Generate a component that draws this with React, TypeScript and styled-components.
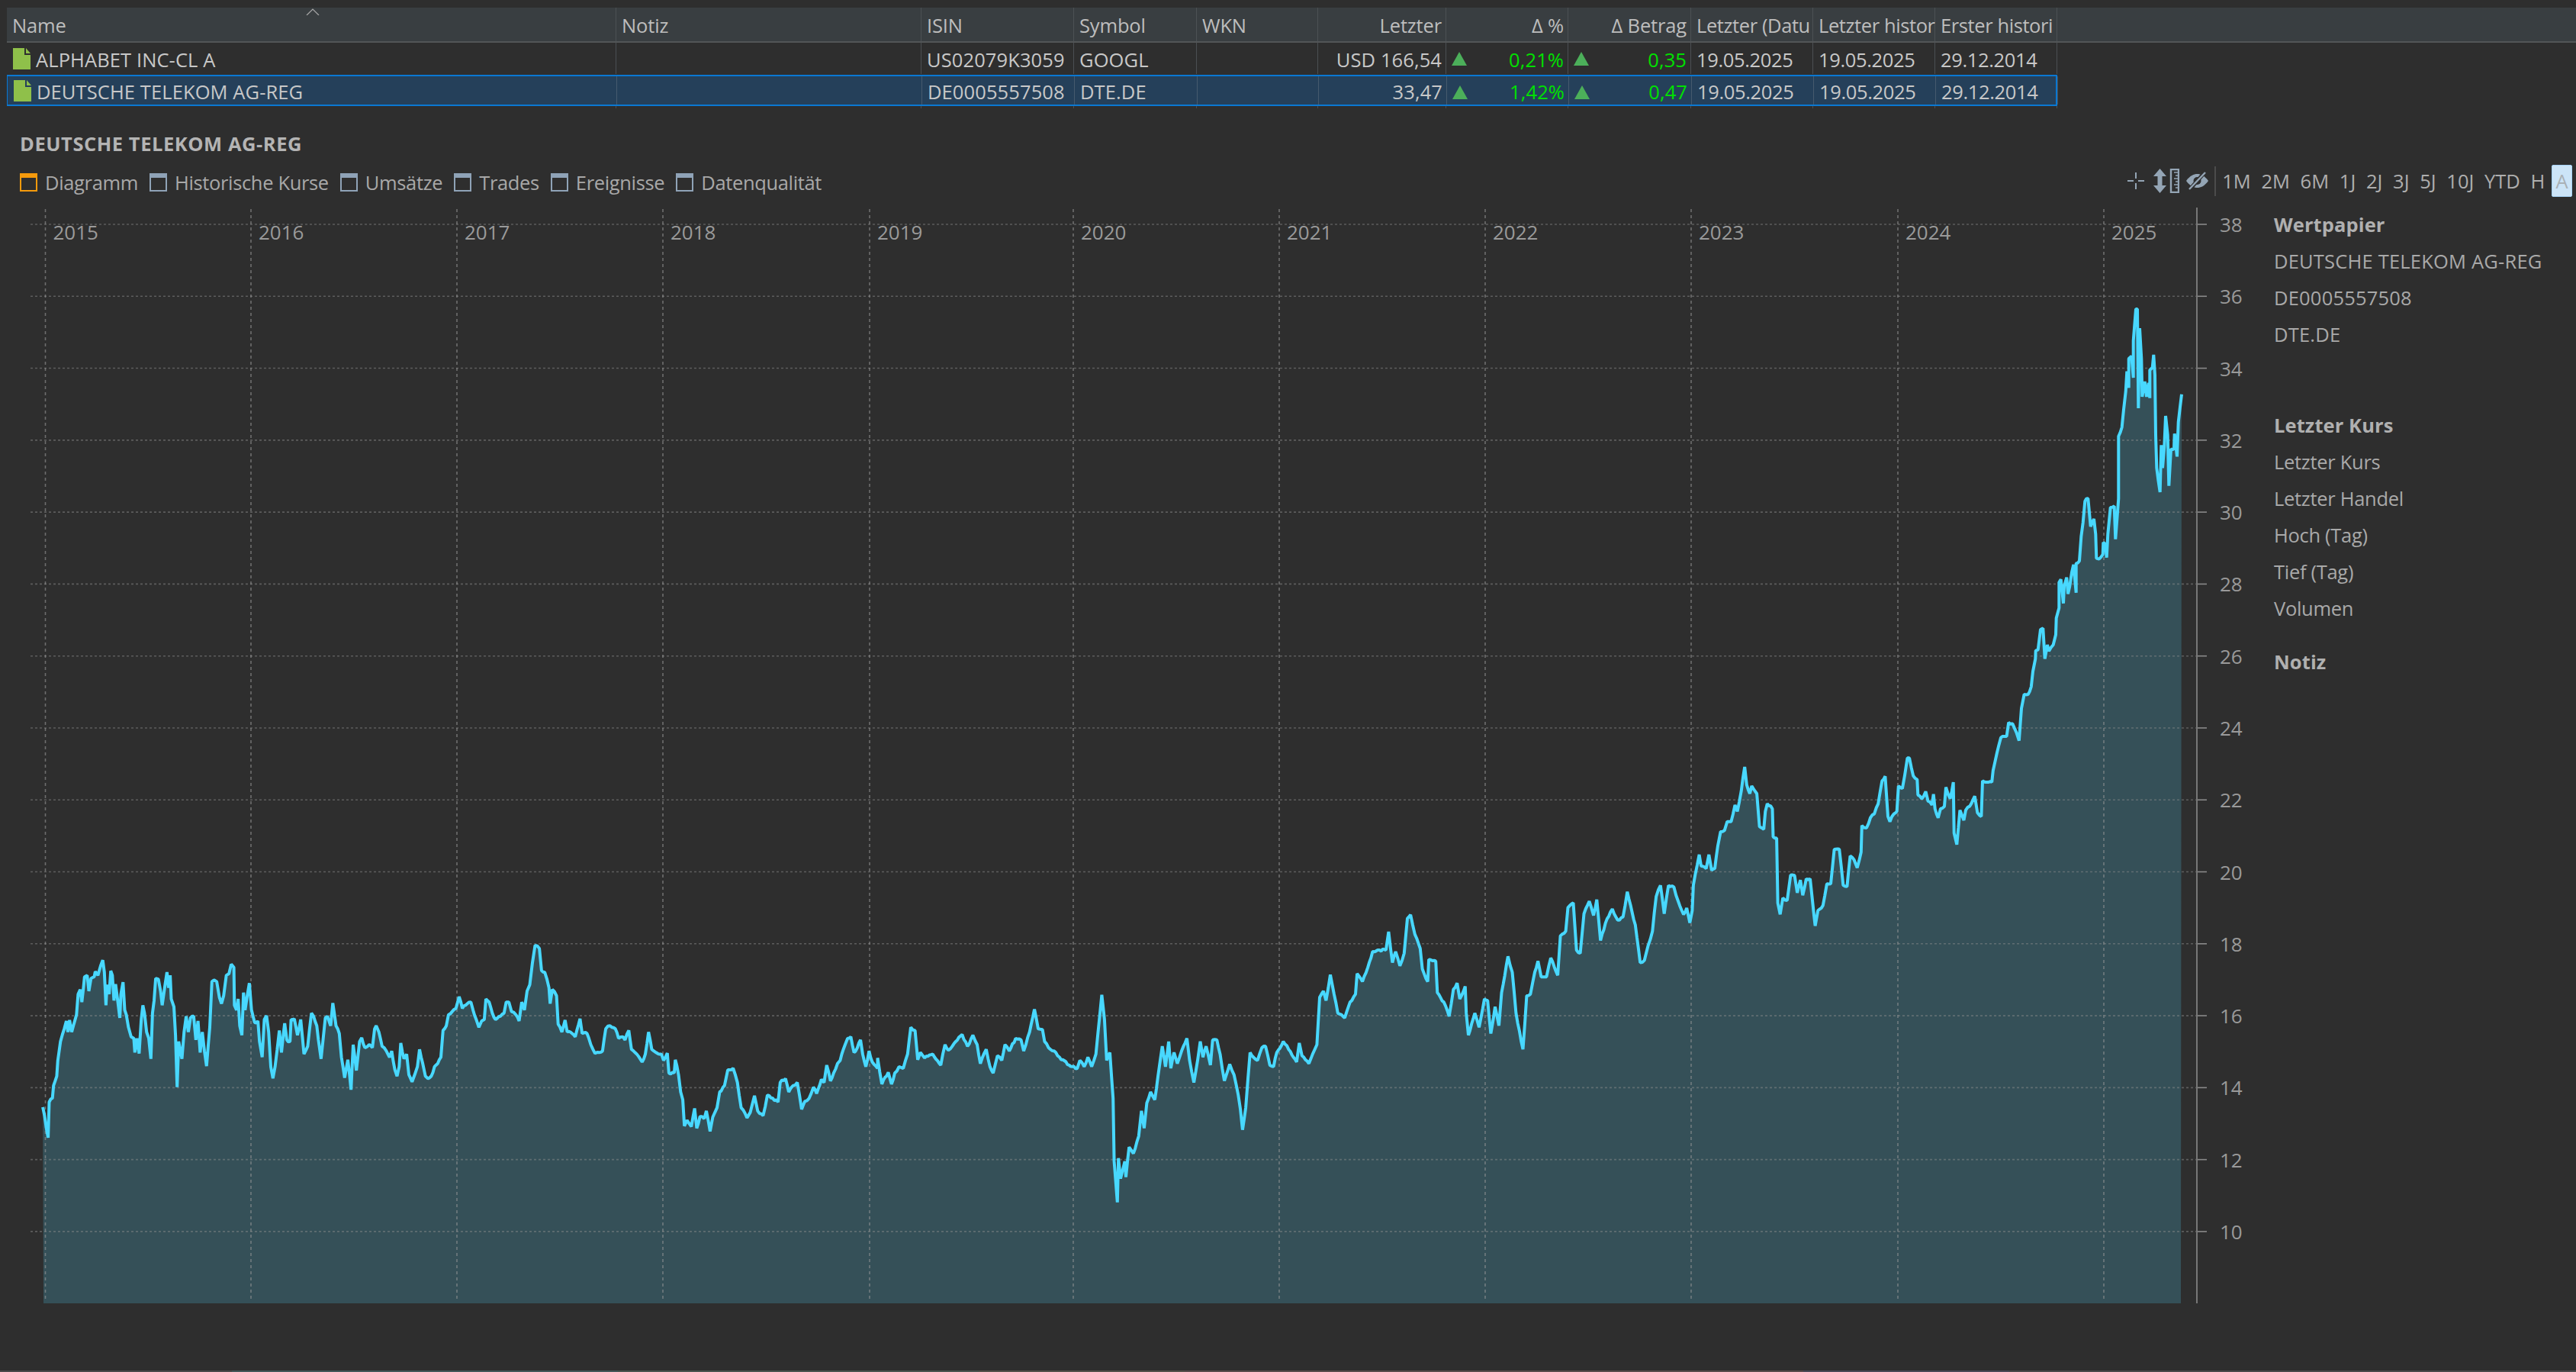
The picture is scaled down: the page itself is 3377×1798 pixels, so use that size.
import React from 'react';
import styled, { createGlobalStyle } from 'styled-components';

const GlobalStyle = createGlobalStyle`
  html, body {
    margin: 0;
    padding: 0;
    background: #2e2e2e;
    overflow: hidden;
  }

  body {
    font-family: "Open Sans", "Noto Sans", sans-serif;
    font-size: 25.5px;
    letter-spacing: -0.35px;
    color: #c8c8c8;
  }
`;

const COLUMNS =
  '799px 400px 200px 161px 159px 168px 160px 161px 160px 160px 160px';

// Kursverlauf, abgelesen aus Ausschnitten des Diagramms.
// Jeder Abschnitt hat eigene Skalierung: [x0, sx, y0, sy, punkte]
type Trace = [number, number, number, number, number[]];

const TRACES: Trace[] = [
  [0, 1.4255, 1150, 2.42, [
    80,728, 90,825, 92,712, 98,700, 100,660, 106,630, 108,580, 113,520, 120,480, 124,455, 127,490, 130,452, 134,490, 138,465, 143,435, 146,370,
    150,355, 153,395, 156,350, 158,315, 163,310, 166,360, 170,320, 176,315, 178,298, 183,310, 188,280, 192,262, 195,300, 198,405, 200,340, 204,370,
    207,296, 210,310, 213,390, 216,338, 220,390, 224,445, 226,370, 230,332, 233,420, 236,435, 240,475, 245,505, 250,510, 252,555, 256,510, 260,558,
    264,450, 267,405, 270,430, 274,490, 278,510, 282,575, 285,430, 288,390, 291,320, 296,322, 300,360, 303,405, 308,345, 312,300, 315,350, 318,310,
    320,385, 325,410, 328,500, 331,665, 334,520, 340,575, 344,490, 348,440, 352,490, 356,445, 362,440, 366,515, 370,455, 374,555, 378,490, 382,550,
    386,598, 392,475, 396,330, 400,325, 405,330, 410,380, 414,400, 418,375, 423,310, 428,305, 432,275, 437,285, 438,405, 442,420, 445,385, 448,470,
    452,500, 455,365, 458,420, 462,375, 466,335, 470,420, 476,460, 482,455, 485,520, 490,570, 494,450, 498,438, 502,490, 506,600, 510,637, 514,600,
    522,485, 526,555, 532,462, 536,515, 542,520, 544,450, 550,448, 556,500, 562,450, 568,560, 575,535, 582,430, 586,440, 592,470, 595,515, 600,575,
    608,445, 612,440, 618,470, 622,398, 628,470, 634,495, 638,570, 644,635, 650,578, 656,673, 660,530, 666,612, 672,520, 676,508, 682,540, 690,530,
    696,540, 700,480, 703,470, 708,490, 714,535, 722,550, 728,570, 732,550, 738,610, 742,630, 746,600, 749,525, 755,575, 760,560, 764,625, 770,648,
    775,625, 780,600, 784,545, 790,590, 795,630, 800,638, 806,630, 812,600, 818,590, 824,570, 828,485, 834,470, 838,435, 845,425, 852,415, 858,378,
    864,415, 870,405, 880,395, 884,420, 890,450, 895,475, 900,455, 905,450, 908,385, 914,395, 920,430, 926,450, 935,440, 942,430, 946,395, 951,395,
    956,425, 964,435, 970,455, 975,395, 980,420, 985,360, 990,340, 995,270, 1000,215, 1008,225, 1012,295, 1018,300, 1026,350, 1028,400, 1032,355,
    1040,375, 1043,465, 1050,490, 1056,452, 1060,490, 1066,490, 1075,505, 1084,448, 1088,495, 1097,495, 1104,530, 1112,558, 1120,555, 1126,550,
    1132,480, 1140,470, 1150,480, 1156,510, 1164,505, 1168,515, 1175,485, 1180,545, 1190,560, 1200,585, 1206,560, 1212,490, 1218,545, 1226,555,
    1236,560, 1240,580, 1247,557, 1250,620, 1260,620, 1262,578, 1268,625, 1272,680, 1276,705, 1279,788, 1284,770, 1292,790, 1298,732, 1302,795,
    1308,758, 1316,765, 1320,740, 1327,805, 1332,760, 1340,730, 1345,680, 1354,660, 1360,610, 1370,605, 1378,650, 1385,730, 1396,762, 1402,745,
    1410,692, 1416,740, 1426,755, 1434,690, 1444,700, 1454,712, 1458,650, 1468,638, 1474,680, 1482,660, 1490,650, 1498,735, 1504,710, 1512,700,
    1520,665, 1526,685, 1535,640, 1540,650, 1545,595, 1552,645, 1558,620, 1565,590,
  ]],
  [1100, 1.4255, 1150, 2.42, [
    2,580, 8,545, 16,510, 22,505, 28,555, 34,540, 40,515, 44,560, 50,600, 56,550, 62,585, 72,605, 72,572, 80,655, 92,618, 98,655, 104,620, 112,600,
    120,605, 128,560, 134,475, 142,485, 147,578, 152,555, 160,572, 175,560, 190,595, 198,530, 204,548, 218,520, 230,498, 240,535, 250,500, 258,530,
    264,590, 275,545, 282,600, 288,620, 296,565, 304,580, 310,530, 318,550, 330,510, 340,515, 345,550, 356,490, 365,418, 372,480, 380,482, 384,520,
    395,545, 405,555, 412,570, 430,595, 445,605, 450,580, 458,600, 465,570, 472,600, 480,560, 484,490, 491,372, 496,450, 500,580, 506,555, 512,700,
    514,900, 520,1030, 522,890, 526,955, 534,900, 536,950, 542,855, 550,875, 560,820, 565,740, 570,795, 575,715, 582,680, 590,705, 596,630, 604,535,
    610,600, 616,520, 620,605, 626,555, 632,590, 640,550, 650,510, 655,580, 663,650, 670,580, 675,520, 680,570, 686,535, 694,595, 698,515, 706,515,
    712,560, 720,645, 730,592, 738,625, 746,690, 750,735, 754,800, 760,730, 768,555, 782,580, 790,540, 797,535, 805,595, 812,600, 818,555, 830,520,
    840,545, 855,585, 860,525, 865,565, 878,590, 885,560, 893,530, 898,380, 905,360, 910,390, 918,308, 925,370, 932,430, 945,445, 955,395, 965,370,
    968,305, 978,330, 988,285, 997,235, 1010,230, 1022,230, 1027,172, 1034,270, 1040,235, 1048,280, 1056,240, 1062,130, 1068,118, 1076,180, 1086,225,
    1090,290, 1100,330, 1102,260, 1115,265, 1118,365, 1130,395, 1140,440, 1148,355, 1155,335, 1160,385, 1170,345, 1172,430, 1176,500, 1188,430,
    1196,475, 1206,385, 1212,390, 1218,495, 1226,410, 1233,470, 1238,365, 1250,250, 1258,300, 1265,430, 1278,545, 1285,375, 1292,370, 1300,300,
    1306,265, 1312,315, 1322,315, 1330,255, 1343,310, 1348,185, 1358,170, 1362,95, 1372,80, 1378,230, 1385,240, 1392,115, 1402,75, 1410,120, 1416,70,
    1423,200, 1432,145, 1445,100, 1455,135, 1465,125, 1473,45, 1482,110, 1488,150, 1497,270, 1505,262, 1512,215, 1520,170, 1527,60, 1535,25, 1542,115,
    1550,25, 1560,30, 1568,75,
  ]],
  [2100, 1.96, 900, 3, [
    200,860, 210,895, 218,870, 226,928, 232,880, 235,780, 245,700, 250,660, 255,705, 268,715, 275,660, 282,722, 290,715, 298,625, 305,570, 315,565,
    322,530, 332,530, 342,465, 348,490, 358,410, 367,315, 372,385, 380,420, 385,390, 398,420, 405,550, 416,560, 420,490, 425,460, 438,480, 440,590,
    449,595, 452,850, 458,895, 465,830, 476,840, 485,740, 495,742, 502,810, 510,760, 516,820, 525,755, 535,755, 545,900, 548,940, 555,880, 568,860,
    578,775, 588,775, 597,640, 610,638, 620,780, 630,785, 638,665, 648,680, 656,712, 666,650, 668,545, 680,555, 690,515, 700,500, 710,460, 720,370,
    728,352, 735,510, 740,530, 750,500, 758,490, 762,390, 772,400, 778,350, 785,280, 790,280, 800,350, 810,365, 812,425, 822,440, 832,412, 838,450,
    848,465, 852,422, 856,480, 864,515, 870,480, 880,470, 884,395, 895,440, 903,375, 905,575, 912,620, 920,485, 930,525, 935,485, 945,470, 958,430,
    965,495, 975,510, 978,370, 990,375, 1002,375, 1005,330, 1015,260, 1025,200, 1040,195, 1045,140, 1055,145, 1065,180, 1072,212, 1078,85, 1085,30,
    1095,30, 1103,0,
  ]],
  [2400, 3, 380, 3, [
    795,1500, 805,1450, 806,1418, 815,1415, 825,1335, 835,1330, 842,1450, 852,1395, 858,1420, 875,1395, 885,1355, 887,1290, 898,1250, 898,1150,
    905,1138, 915,1232, 918,1165, 928,1130, 933,1195, 940,1165, 948,1110, 955,1080, 965,1190, 965,1075, 978,1065, 985,970, 992,915, 1000,830,
    1012,820, 1022,930, 1035,900, 1042,960, 1045,1055, 1055,1058, 1070,1040, 1072,992, 1080,1000, 1085,1052, 1090,960, 1100,855, 1115,850, 1120,980,
    1127,885, 1132,820, 1132,575, 1145,540, 1152,470, 1160,400, 1165,320, 1172,385, 1172,270, 1183,260, 1190,345, 1190,200, 1200,75, 1206,75, 1210,465,
    1215,150, 1222,270, 1225,420, 1235,360, 1242,420, 1250,365, 1255,425, 1255,315, 1265,305, 1270,255, 1275,335, 1278,570, 1282,700, 1295,795,
    1300,610, 1305,700, 1312,615, 1317,495, 1325,570, 1330,770, 1338,625, 1350,625, 1352,565, 1362,655, 1367,520, 1380,410,
  ]],
];

function wobble(i: number) {
  const v = Math.sin(i * 12.9898) * 43758.5453;
  return (v - Math.floor(v) - 0.5) * 3.2;
}

// Punkte umrechnen und zwischen ihnen kleine Ausschläge einfügen,
// damit die Linie so kräftig wirkt wie der echte Tageskurs.
function buildLine() {
  const pts: [number, number][] = [];

  for (const [x0, sx, y0, sy, raw] of TRACES) {
    for (let i = 0; i < raw.length; i += 2) {
      pts.push([x0 + raw[i] / sx, y0 + raw[i + 1] / sy]);
    }
  }

  const out: string[] = [];
  let n = 0;

  pts.forEach(([x, y], i) => {
    out.push(`${x.toFixed(1)},${y.toFixed(1)}`);

    const next = pts[i + 1];
    if (!next) return;

    const steps = Math.floor((next[0] - x) / 2);
    for (let k = 1; k < steps; k++) {
      const t = k / steps;
      const px = x + (next[0] - x) * t;
      const py = y + (next[1] - y) * t + wobble(n++);
      out.push(`${px.toFixed(1)},${py.toFixed(1)}`);
    }
  });

  return out;
}

const LINE = buildLine();
const AREA = ['57,1708', ...LINE, '2859,1708'].join(' ');

const PRICES = [38, 36, 34, 32, 30, 28, 26, 24, 22, 20, 18, 16, 14, 12, 10];
const priceY = (v: number) => 294 + (38 - v) * 47.14;

const YEARS: [string, number][] = [
  ['2015', 59.5],
  ['2016', 329],
  ['2017', 599],
  ['2018', 869],
  ['2019', 1140],
  ['2020', 1407],
  ['2021', 1677],
  ['2022', 1947],
  ['2023', 2217],
  ['2024', 2488],
  ['2025', 2758],
];

const Page = styled.div`
  width: 3377px;
  height: 1798px;
  padding-top: 10px;
  box-sizing: border-box;
  position: relative;
  overflow: hidden;
`;

const HeaderBar = styled.div`
  height: 46px;
  box-sizing: border-box;
  margin-left: 9px;
  background: #393e41;
  border-bottom: 2px solid #525557;
  display: grid;
  grid-template-columns: ${COLUMNS};
  color: #bdbdbd;
`;

const HeadCell = styled.div<{ $right?: boolean; $tight?: boolean }>`
  border-right: 1px solid #4c5154;
  padding: 2px ${(p) => (p.$tight ? 2 : 5)}px 0 7px;
  display: flex;
  align-items: center;
  justify-content: ${(p) => (p.$right ? 'flex-end' : 'flex-start')};
  position: relative;
  min-width: 0;
  letter-spacing: ${(p) => (p.$tight ? '-0.4px' : '-0.15px')};
`;

const HeadLabel = styled.span`
  display: block;
  white-space: nowrap;
`;

const SortCaret = styled.svg`
  position: absolute;
  left: 392px;
  top: 1px;
`;

const Row = styled.div<{ $selected?: boolean }>`
  width: 2688px;
  margin-left: 9px;
  height: ${(p) => (p.$selected ? 41 : 42)}px;
  box-sizing: border-box;
  display: grid;
  grid-template-columns: ${COLUMNS};
  background: ${(p) => (p.$selected ? '#25405a' : 'transparent')};
  border: ${(p) => (p.$selected ? '2px solid #0a78d2' : 'none')};
  border-left-width: ${(p) => (p.$selected ? 1 : 0)}px;
  padding-bottom: ${(p) => (p.$selected ? 0 : 1)}px;
`;

const Cell = styled.div<{ $right?: boolean; $green?: boolean; $tight?: boolean }>`
  border-right: 1px solid rgba(120, 130, 140, 0.4);
  padding: 2px 5px 0 7px;
  display: flex;
  align-items: center;
  justify-content: ${(p) => (p.$right ? 'flex-end' : 'flex-start')};
  color: ${(p) => (p.$green ? '#00e000' : '#c8c8c8')};
  letter-spacing: ${(p) => (p.$tight ? '-0.35px' : '0.1px')};
  white-space: nowrap;
  position: relative;
  min-width: 0;
`;

const Stub = styled.div`
  width: 2688px;
  height: 3px;
  margin-left: 9px;
  display: grid;
  grid-template-columns: ${COLUMNS};
`;

const StubLine = styled.div`
  border-right: 1px solid rgba(120, 130, 140, 0.4);
`;

const DocIcon = styled.svg`
  margin: -2px 7px 0 1px;
  flex: none;
`;

const Triangle = styled.svg`
  position: absolute;
  left: 7px;
  top: 12px;
`;

const Section = styled.section`
  padding-top: 26px;
`;

const Title = styled.h2`
  margin: 0 0 0 26px;
  height: 40px;
  line-height: 40px;
  font-size: 25.5px;
  font-weight: 700;
  letter-spacing: 0.55px;
  color: #b4b4b4;
`;

const Toolbar = styled.div`
  margin-top: 8px;
  height: 42px;
  padding: 0 5px 0 26px;
  display: flex;
  align-items: center;
  justify-content: space-between;
  color: #a8a8a8;
`;

const Tabs = styled.div`
  display: flex;
  gap: 15px;
  padding-top: 4px;
`;

const Tab = styled.div`
  display: flex;
  align-items: center;
  gap: 10px;
`;

const Tools = styled.div`
  display: flex;
  align-items: center;
`;

const ToolIcon = styled.svg`
  display: block;
  flex: none;
`;

const ToolDivider = styled.div`
  width: 2px;
  height: 39px;
  background: #4b4b4b;
  margin: 0 8px 0 8px;
`;

const Ranges = styled.div`
  display: flex;
  align-items: center;
  gap: 13.7px;
  letter-spacing: 0;
  color: #aeaeae;
`;

const RangeActive = styled.div`
  width: 27px;
  height: 42px;
  box-sizing: border-box;
  background: #cce4f7;
  border: 1px solid #a6d2f5;
  border-radius: 2px;
  color: #a9b0b5;
  display: flex;
  align-items: center;
  justify-content: center;
  margin-left: -5px;
`;

const Body = styled.div`
  margin-top: 12px;
  display: flex;
`;

const ChartSvg = styled.svg`
  width: 2981px;
  height: 1450px;
  flex: none;
  display: block;
`;

const ChartText = styled.text`
  font-family: "Open Sans", "Noto Sans", sans-serif;
  font-size: 26px;
  letter-spacing: 0;
  fill: #9a9a9a;
`;

const Side = styled.aside`
  color: #a9a9a9;
`;

const SideBold = styled.div`
  font-weight: 700;
  line-height: 48px;
  letter-spacing: 0.1px;
  color: #b0b0b0;
`;

const SideLine = styled.div<{ $caps?: boolean }>`
  line-height: 48px;
  letter-spacing: ${(p) => (p.$caps ? '0.2px' : '-0.3px')};
`;

const SideGroup = styled.div`
  margin-bottom: 22px;

  &:nth-child(1) {
    margin-bottom: 71px;
  }
`;

const BottomStrip = styled.div`
  position: absolute;
  left: 0;
  right: 0;
  bottom: 0;
  height: 2px;
  background: linear-gradient(90deg, #4a4a4a 0 9%, #44585a 9% 24%, #4a5550 24% 38%, #55524a 38% 46%, #5a4c4c 46% 70%, #4a4a58 70% 78%, #4a4a4a 78%);
`;

function Doc() {
  return (
    <DocIcon width="23" height="28" viewBox="0 0 23 28">
      <path d="M0 0H15V9H23V28H0Z" fill="#8fc04a" />
      <path d="M17 0L23 7H17Z" fill="#8fc04a" />
    </DocIcon>
  );
}

function Up() {
  return (
    <Triangle width="20" height="18" viewBox="0 0 20 18">
      <path d="M10 0L20 18H0Z" fill="#4caf5a" />
    </Triangle>
  );
}

function WindowIcon({ color }: { color: string }) {
  return (
    <svg width="23" height="24" viewBox="0 0 23 24">
      <rect x="1" y="1" width="21" height="22" fill="none" stroke={color} strokeWidth="2" />
      <rect x="0" y="0" width="23" height="6" fill={color} />
    </svg>
  );
}

function CrossIcon() {
  return (
    <ToolIcon width="22" height="22" viewBox="0 0 22 22">
      <path d="M11 0V8M11 14V22M0 11H8M14 11H22" stroke="#94a5b5" strokeWidth="2" fill="none" />
    </ToolIcon>
  );
}

function AxisIcon() {
  return (
    <ToolIcon width="34" height="32" viewBox="0 0 34 32" style={{ marginLeft: 12 }}>
      <path d="M8.5 0L17 10H11.5V22H17L8.5 32L0 22H5.5V10H0Z" fill="#94a5b5" />
      <rect x="23" y="1" width="10" height="30" fill="none" stroke="#94a5b5" strokeWidth="2.4" />
      <path d="M27 5H32M29 9H32M27 13H32M29 17H32M27 21H32M29 25H32" stroke="#94a5b5" strokeWidth="1.4" />
    </ToolIcon>
  );
}

function EyeOffIcon() {
  return (
    <ToolIcon width="29" height="24" viewBox="0 0 29 24" style={{ marginLeft: 9 }}>
      <path d="M0 12C5 5 10 3 14.5 3S24 5 29 12C24 19 19 21 14.5 21S5 19 0 12Z" fill="#94a5b5" />
      <circle cx="14.5" cy="12" r="5" fill="#2e2e2e" />
      <path d="M4 24L25 0" stroke="#2e2e2e" strokeWidth="5" />
      <path d="M4 23L25 1" stroke="#94a5b5" strokeWidth="2.4" />
    </ToolIcon>
  );
}

function Chart() {
  const line = LINE.join(' ');

  return (
    <ChartSvg viewBox="0 270 2981 1450">
      <polygon points={AREA} fill="#355058" />

      {PRICES.map((v) => (
        <line
          key={v}
          x1="40"
          x2="2880"
          y1={priceY(v)}
          y2={priceY(v)}
          stroke="#8c8c8c"
          strokeOpacity="0.5"
          strokeWidth="1.6"
          strokeDasharray="3 3"
        />
      ))}

      {YEARS.map(([, x]) => (
        <line
          key={x}
          x1={x}
          x2={x}
          y1="274"
          y2="1705"
          stroke="#999"
          strokeOpacity="0.6"
          strokeWidth="1.6"
          strokeDasharray="4 4"
        />
      ))}

      <polyline
        points={line}
        fill="none"
        stroke="#48d8ff"
        strokeWidth="4"
        strokeLinejoin="bevel"
      />

      {YEARS.map(([year, x]) => (
        <ChartText key={year} x={x + 10} y="314">
          {year}
        </ChartText>
      ))}

      <line x1="2880" x2="2880" y1="272" y2="1708" stroke="#777" strokeWidth="2" />

      {PRICES.map((v) => (
        <React.Fragment key={v}>
          <line x1="2881" x2="2893" y1={priceY(v)} y2={priceY(v)} stroke="#8a8a8a" strokeWidth="1.6" />
          <ChartText x="2910" y={priceY(v) + 10}>
            {v}
          </ChartText>
        </React.Fragment>
      ))}
    </ChartSvg>
  );
}

const TABS = ['Diagramm', 'Historische Kurse', 'Umsätze', 'Trades', 'Ereignisse', 'Datenqualität'];
const RANGES = ['1M', '2M', '6M', '1J', '2J', '3J', '5J', '10J', 'YTD', 'H'];

function Stock(props: {
  selected?: boolean;
  name: string;
  isin: string;
  symbol: string;
  last: string;
  pct: string;
  amount: string;
}) {
  return (
    <Row $selected={props.selected}>
      <Cell>
        <Doc />
        {props.name}
      </Cell>
      <Cell />
      <Cell>{props.isin}</Cell>
      <Cell>{props.symbol}</Cell>
      <Cell />
      <Cell $right>{props.last}</Cell>
      <Cell $right $green>
        <Up />
        {props.pct}
      </Cell>
      <Cell $right $green>
        <Up />
        {props.amount}
      </Cell>
      <Cell $tight>19.05.2025</Cell>
      <Cell $tight>19.05.2025</Cell>
      <Cell $tight>29.12.2014</Cell>
    </Row>
  );
}

export default function App() {
  return (
    <Page>
      <GlobalStyle />

      <HeaderBar>
        <HeadCell>
          <SortCaret width="18" height="9" viewBox="0 0 18 9">
            <path d="M1 9L9 1L17 9" fill="none" stroke="#aaa" strokeWidth="1.2" />
          </SortCaret>
          <HeadLabel>Name</HeadLabel>
        </HeadCell>
        <HeadCell>
          <HeadLabel>Notiz</HeadLabel>
        </HeadCell>
        <HeadCell>
          <HeadLabel>ISIN</HeadLabel>
        </HeadCell>
        <HeadCell>
          <HeadLabel>Symbol</HeadLabel>
        </HeadCell>
        <HeadCell>
          <HeadLabel>WKN</HeadLabel>
        </HeadCell>
        <HeadCell $right>
          <HeadLabel>Letzter</HeadLabel>
        </HeadCell>
        <HeadCell $right>
          <HeadLabel>Δ %</HeadLabel>
        </HeadCell>
        <HeadCell $right>
          <HeadLabel>Δ Betrag</HeadLabel>
        </HeadCell>
        <HeadCell $tight>
          <HeadLabel>Letzter (Datu</HeadLabel>
        </HeadCell>
        <HeadCell $tight>
          <HeadLabel>Letzter histor</HeadLabel>
        </HeadCell>
        <HeadCell $tight>
          <HeadLabel>Erster histori</HeadLabel>
        </HeadCell>
      </HeaderBar>

      <Stock
        name="ALPHABET INC-CL A"
        isin="US02079K3059"
        symbol="GOOGL"
        last="USD 166,54"
        pct="0,21%"
        amount="0,35"
      />
      <Stock
        selected
        name="DEUTSCHE TELEKOM AG-REG"
        isin="DE0005557508"
        symbol="DTE.DE"
        last="33,47"
        pct="1,42%"
        amount="0,47"
      />

      <Stub>
        {Array.from({ length: 11 }, (_, i) => (
          <StubLine key={i} />
        ))}
      </Stub>

      <Section>
        <Title>DEUTSCHE TELEKOM AG-REG</Title>

        <Toolbar>
          <Tabs>
            {TABS.map((tab, i) => (
              <Tab key={tab}>
                <WindowIcon color={i === 0 ? '#f59a0c' : '#8fa3b7'} />
                {tab}
              </Tab>
            ))}
          </Tabs>

          <Tools>
            <CrossIcon />
            <AxisIcon />
            <EyeOffIcon />
            <ToolDivider />
            <Ranges>
              {RANGES.map((r) => (
                <span key={r}>{r}</span>
              ))}
              <RangeActive>A</RangeActive>
            </Ranges>
          </Tools>
        </Toolbar>

        <Body>
          <Chart />

          <Side>
            <SideGroup>
              <SideBold>Wertpapier</SideBold>
              <SideLine $caps>DEUTSCHE TELEKOM AG-REG</SideLine>
              <SideLine $caps>DE0005557508</SideLine>
              <SideLine $caps>DTE.DE</SideLine>
            </SideGroup>
            <SideGroup>
              <SideBold>Letzter Kurs</SideBold>
              <SideLine>Letzter Kurs</SideLine>
              <SideLine>Letzter Handel</SideLine>
              <SideLine>Hoch (Tag)</SideLine>
              <SideLine>Tief (Tag)</SideLine>
              <SideLine>Volumen</SideLine>
            </SideGroup>
            <SideGroup>
              <SideBold>Notiz</SideBold>
            </SideGroup>
          </Side>
        </Body>
      </Section>

      <BottomStrip />
    </Page>
  );
}
